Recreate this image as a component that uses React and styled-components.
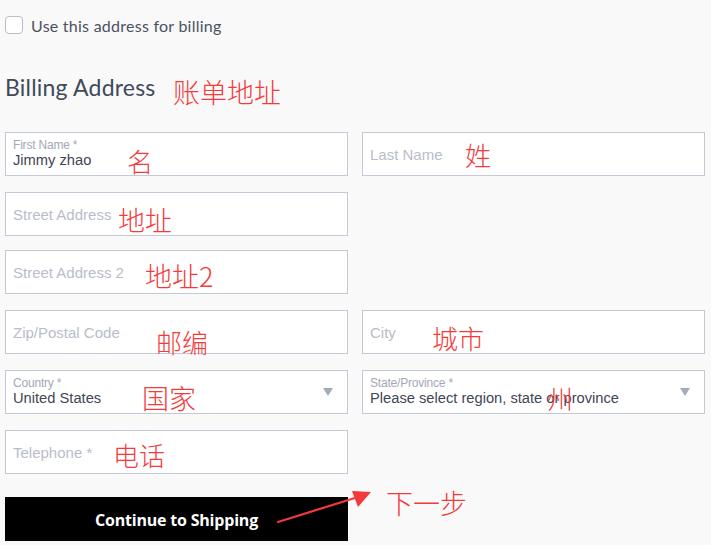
import React from "react";
import styled, { createGlobalStyle } from "styled-components";

const Global = createGlobalStyle`
  html, body { margin: 0; padding: 0; background: #f9f9f9; }
  body { font-family: "Liberation Sans", Arial, sans-serif; }
  * { box-sizing: border-box; }
`;

const Page = styled.div`
  position: relative;
  width: 711px;
  height: 545px;
  overflow: hidden;
  padding: 16px 0 0 5px;
  background: #f9f9f9;
`;

const CheckRow = styled.label`
  display: flex;
  align-items: center;
  gap: 8px;
  height: 18px;
  font-family: Lato, "Open Sans", sans-serif;
  font-size: 16px;
  letter-spacing: 0.25px;
  color: #4a5262;
`;

const CheckBox = styled.span`
  width: 18px;
  height: 18px;
  border: 1px solid #b9bdc6;
  border-radius: 4px;
  background: #fff;
`;

const Heading = styled.h2`
  margin: 38px 0 0;
  height: 30px;
  font-family: Lato, "Open Sans", sans-serif;
  font-weight: 400;
  font-size: 23px;
  letter-spacing: 0.2px;
  line-height: 30px;
  color: #3f4a5a;
`;

const Form = styled.div`
  display: flex;
  flex-direction: column;
  margin-top: 30px;
`;

const Row = styled.div`
  display: grid;
  grid-template-columns: 343px 343px;
  column-gap: 14px;
  margin-top: ${(p) => p.$mt || 0}px;
`;

const Field = styled.div`
  position: relative;
  height: 44px;
  background: #fff;
  border: 1px solid #c4cad5;
  padding: 0 7px;
  display: flex;
  flex-direction: column;
  justify-content: center;
`;

const Label = styled.span`
  font-size: 12px;
  line-height: 13px;
  color: #a3a8b8;
  letter-spacing: -0.2px;
  margin-top: -1px;
`;

const Value = styled.span`
  font-size: 14.7px;
  line-height: 17px;
  color: #3f4654;
`;

const Placeholder = styled.span`
  font-size: 15px;
  line-height: 17px;
  color: #b9bdca;
`;

const Caret = styled.span`
  position: absolute;
  right: 14px;
  top: 17px;
  width: 0;
  height: 0;
  border-left: 5.5px solid transparent;
  border-right: 5.5px solid transparent;
  border-top: 8px solid #a4abba;
`;

const Button = styled.button`
  height: 44px;
  border: 0;
  background: #000;
  color: #fff;
  font-family: "Open Sans", Lato, sans-serif;
  font-weight: 700;
  font-size: 16px;
  letter-spacing: -0.2px;
  padding: 0;
  padding-top: 2px;
`;

const Note = styled.span`
  position: absolute;
  left: ${(p) => p.$x}px;
  top: ${(p) => p.$y}px;
  font-family: "Noto Sans CJK SC", "Liberation Serif", serif;
  font-weight: 300;
  font-size: ${(p) => p.$s || 25}px;
  line-height: 1;
  color: #f43b3b;
  white-space: nowrap;
  pointer-events: none;
`;

const Arrow = styled.svg`
  position: absolute;
  left: 270px;
  top: 480px;
  pointer-events: none;
`;

function TextField({ label, value, placeholder, select }) {
  return (
    <Field>
      {label && <Label>{label}</Label>}
      {value && <Value>{value}</Value>}
      {placeholder && <Placeholder>{placeholder}</Placeholder>}
      {select && <Caret />}
    </Field>
  );
}

export default function App() {
  return (
    <>
      <Global />
      <Page>
        <CheckRow>
          <CheckBox />
          Use this address for billing
        </CheckRow>
        <Heading>Billing Address</Heading>
        <Form>
          <Row>
            <TextField label="First Name *" value="Jimmy zhao" />
            <TextField placeholder="Last Name" />
          </Row>
          <Row $mt={16}>
            <TextField placeholder="Street Address" />
          </Row>
          <Row $mt={14}>
            <TextField placeholder="Street Address 2" />
          </Row>
          <Row $mt={16}>
            <TextField placeholder="Zip/Postal Code" />
            <TextField placeholder="City" />
          </Row>
          <Row $mt={16}>
            <TextField label="Country *" value="United States" select />
            <TextField
              label="State/Province *"
              value="Please select region, state or province"
              select
            />
          </Row>
          <Row $mt={16}>
            <TextField placeholder="Telephone *" />
          </Row>
          <Row $mt={23}>
            <Button>Continue to Shipping</Button>
          </Row>
        </Form>

        <Note $x={173} $y={78} $s={27}>账单地址</Note>
        <Note $x={127} $y={148} $s={26}>名</Note>
        <Note $x={465} $y={142} $s={26}>姓</Note>
        <Note $x={118} $y={206} $s={27}>地址</Note>
        <Note $x={145} $y={262} $s={27}>地址2</Note>
        <Note $x={156} $y={329} $s={26}>邮编</Note>
        <Note $x={432} $y={325} $s={26}>城市</Note>
        <Note $x={142} $y={384} $s={27}>国家</Note>
        <Note $x={547} $y={385} $s={26}>州</Note>
        <Note $x={113} $y={442} $s={26}>电话</Note>
        <Note $x={386} $y={489} $s={27}>下一步</Note>

        <Arrow width="110" height="50" viewBox="0 0 110 50">
          <path d="M8 42 L88 17" stroke="#f33a3a" strokeWidth="2.2" strokeLinecap="round" />
          <polygon points="101,12 82,11 88,27" fill="#f33a3a" />
        </Arrow>
      </Page>
    </>
  );
}
